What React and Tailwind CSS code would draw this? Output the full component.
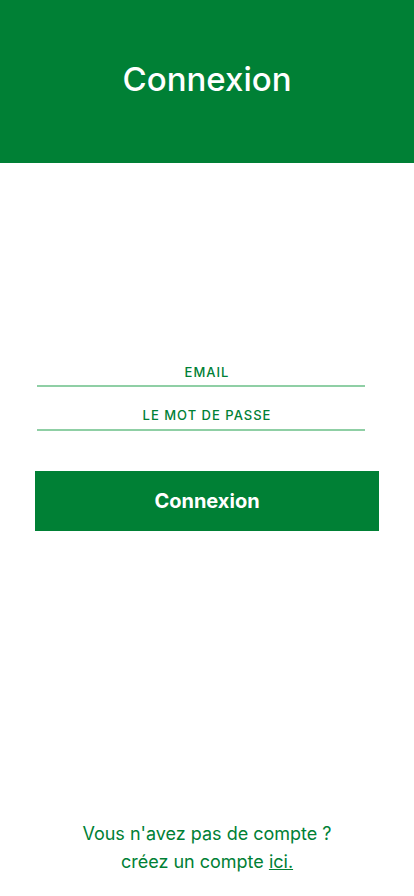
export default function App() {
  return (
    <div className="flex min-h-[896px] w-full flex-col bg-white" style={{ fontFamily: "Inter, 'Noto Sans', sans-serif" }}>
      <header className="flex h-[163px] w-full items-center justify-center bg-[#008035]">
        <h1 className="text-[33px] font-medium text-white leading-none pb-[4px]">Connexion</h1>
      </header>
      <form className="mt-[201px] flex flex-col px-[36px]" onSubmit={(e) => e.preventDefault()}>
        <label className="flex flex-col">
          <span className="text-center text-[13px] font-medium uppercase tracking-[1px] text-[#008035] leading-[16px]">Email</span>
          <span className="mt-[5px] h-[2px] w-[328px] ml-[1px] bg-[#8fcfa5]" />
        </label>
        <label className="mt-[20px] flex flex-col">
          <span className="text-center text-[13px] font-medium uppercase tracking-[1px] text-[#008035] leading-[16px]">Le mot de passe</span>
          <span className="mt-[6px] h-[2px] w-[328px] ml-[1px] bg-[#8fcfa5]" />
        </label>
        <button type="submit" className="mt-[40px] -ml-[1px] flex h-[60px] w-[344px] items-center justify-center bg-[#008035] text-[20px] font-bold text-white">
          Connexion
        </button>
      </form>
      <footer className="mt-auto pb-[20px] text-center text-[18px] leading-[28px] text-[#008035]">
        <p>Vous n'avez pas de compte ?</p>
        <p>créez un compte <a href="#" className="underline">ici.</a></p>
      </footer>
    </div>
  );
}
